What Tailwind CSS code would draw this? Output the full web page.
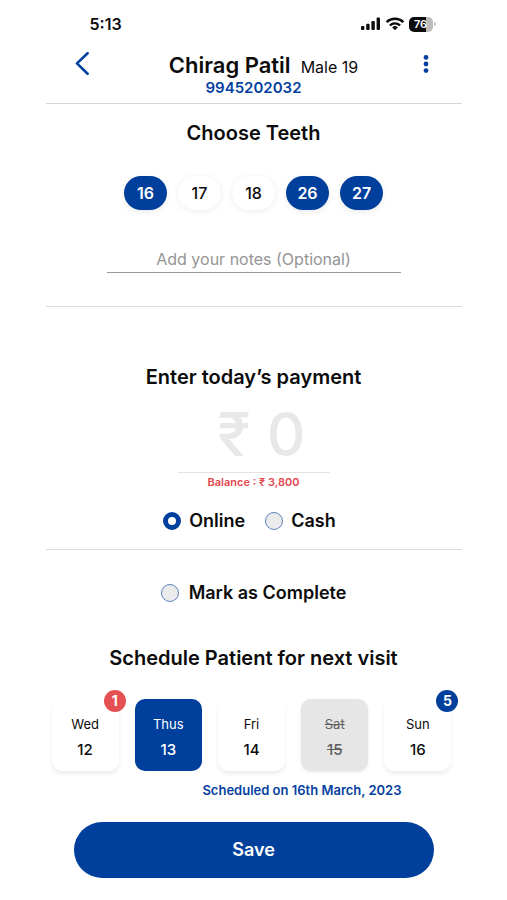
<!DOCTYPE html>
<html lang="en">
<head>
<meta charset="utf-8">
<meta name="viewport" content="width=device-width, initial-scale=1">
<title>Patient visit</title>
<script src="https://cdn.jsdelivr.net/npm/@tailwindcss/browser@4"></script>
</head>
<body class="bg-white text-[#0c0c0c] font-['Inter','Noto_Sans',sans-serif]">
<div class="mx-auto flex min-h-screen w-full max-w-[416px] flex-col">

  <header class="border-b border-[#d6d6d6]">
    <div class="flex h-12 items-center justify-between pr-[26px] pl-11">
      <span class="text-base font-semibold">5:13</span>
      <div class="flex items-center gap-1">
        <svg class="h-[14px] w-[21px]" viewBox="0 0 21 14" fill="#0c0c0c" aria-hidden="true">
          <rect x="1" y="9" width="3.4" height="4" rx="1"/><rect x="6.2" y="6.8" width="3.4" height="6.2" rx="1"/><rect x="11.4" y="4" width="3.4" height="9" rx="1"/><rect x="16.6" y="0.6" width="3.4" height="12.4" rx="1"/>
        </svg>
        <svg class="h-[14px] w-[20px]" viewBox="0 0 20 14" fill="none" stroke="#0c0c0c" stroke-width="2.4" aria-hidden="true">
          <path d="M1.6 5.2a12 12 0 0 1 16.8 0"/><path d="M4.9 8.5a7.3 7.3 0 0 1 10.2 0"/><path d="M10 13.2 7.2 10.4a4 4 0 0 1 5.6 0z" fill="#0c0c0c" stroke="none"/>
        </svg>
        <div class="flex items-center gap-px">
          <span class="flex h-[15px] w-6 items-center justify-center rounded-[5px] bg-linear-to-r from-[#0c0c0c] from-72% to-[#bdbdbd] to-72% text-[11px] leading-none font-semibold text-white">76</span>
          <span class="h-1 w-0.5 rounded-r-full bg-[#bdbdbd]"></span>
        </div>
      </div>
    </div>
    <div class="flex h-[55px] items-start justify-between pr-7 pl-7">
      <button type="button" aria-label="Back" class="mt-1 flex">
        <svg class="h-6 w-4" viewBox="0 0 16 24" fill="none" stroke="#0541a0" stroke-width="2.6" stroke-linecap="round" stroke-linejoin="round"><path d="M13.6 1.2 3 11.4l10.6 10.4"/></svg>
      </button>
      <div class="flex flex-col items-center">
        <h1 class="flex items-baseline gap-2.5 pl-5 text-[22px] leading-[34px] font-semibold">Chirag Patil <small class="text-base font-normal">Male 19</small></h1>
        <a href="tel:9945202032" class="text-[15px] leading-3 font-semibold text-[#0541a0]">9945202032</a>
      </div>
      <button type="button" aria-label="More options" class="mt-1.5 flex w-4 justify-center">
        <svg class="h-5 w-1.5" viewBox="0 0 6 20" fill="#0541a0"><circle cx="3" cy="3.4" r="2.4"/><circle cx="3" cy="10" r="2.4"/><circle cx="3" cy="16.6" r="2.4"/></svg>
      </button>
    </div>
  </header>

  <section class="flex flex-col items-center border-b border-[#dadada] pt-[15px] pb-[33px]">
    <h2 class="text-xl leading-7 font-semibold">Choose Teeth</h2>
    <div class="mt-[29px] flex gap-[11px] text-base font-semibold">
      <button type="button" aria-pressed="true" class="h-[34px] w-[43px] rounded-full bg-[#00409c] text-white shadow-[0_2px_6px_rgba(0,0,0,0.08)]">16</button>
      <button type="button" aria-pressed="false" class="h-[34px] w-[43px] rounded-full bg-white font-medium shadow-[0_1px_6px_rgba(0,0,0,0.08)]">17</button>
      <button type="button" aria-pressed="false" class="h-[34px] w-[43px] rounded-full bg-white font-medium shadow-[0_1px_6px_rgba(0,0,0,0.08)]">18</button>
      <button type="button" aria-pressed="true" class="h-[34px] w-[43px] rounded-full bg-[#00409c] text-white shadow-[0_2px_6px_rgba(0,0,0,0.08)]">26</button>
      <button type="button" aria-pressed="true" class="h-[34px] w-[43px] rounded-full bg-[#00409c] text-white shadow-[0_2px_6px_rgba(0,0,0,0.08)]">27</button>
    </div>
    <input type="text" aria-label="Notes" placeholder="Add your notes (Optional)" class="mt-[31px] h-8 w-[294px] border-b border-[#989898] pt-1 text-center text-base outline-none placeholder:text-[#959595]">
  </section>

  <section class="flex flex-col items-center border-b border-[#dadada] pt-14 pb-[14px]">
    <h2 class="text-xl leading-7 font-semibold"><label for="payment">Enter today’s payment</label></h2>
    <input id="payment" type="text" inputmode="numeric" placeholder="₹ 0" class="mt-1 h-[78px] w-[152px] border-b border-[#e2e2e2] pl-4 text-center text-[60px] leading-none font-medium outline-none placeholder:text-[#e8e8e8]">
    <p class="text-[11px] leading-[18px] font-semibold text-[#e5484d]">Balance : ₹ 3,800</p>
    <div class="mt-4 flex gap-5 pr-2 text-lg leading-7 font-semibold">
      <label class="flex items-center gap-2"><input type="radio" name="method" checked class="size-[18px] appearance-none rounded-full border border-[#5c83c0] bg-[#ebebeb] checked:border-5 checked:border-[#00409c] checked:bg-white">Online</label>
      <label class="flex items-center gap-2"><input type="radio" name="method" class="size-[18px] appearance-none rounded-full border border-[#5c83c0] bg-[#ebebeb] checked:border-5 checked:border-[#00409c] checked:bg-white">Cash</label>
    </div>
  </section>

  <section class="flex flex-col items-center pt-[29px]">
    <label class="flex items-center gap-2.5 text-lg leading-7 font-semibold"><input type="checkbox" class="size-[18px] appearance-none rounded-full border border-[#5c83c0] bg-[#ebebeb] checked:border-5 checked:border-[#00409c] checked:bg-white">Mark as Complete</label>
    <h2 class="mt-[37px] text-xl leading-7 font-semibold">Schedule Patient for next visit</h2>
    <div class="mt-[27px] grid w-full grid-cols-5 gap-4 pr-2.5 pl-1.5">
      <button type="button" class="relative flex h-[72px] flex-col items-center justify-center rounded-[10px] bg-white pt-1.5 shadow-[0_3px_4px_rgba(0,0,0,0.07)]">
        <span class="text-[13px] leading-6">Wed</span><span class="text-[15px] leading-7 font-medium">12</span>
        <span class="absolute -top-[9px] -right-[7px] flex size-[22px] items-center justify-center rounded-full bg-[#e55153] text-sm leading-none font-bold text-white">1</span>
      </button>
      <button type="button" aria-pressed="true" class="flex h-[72px] flex-col items-center justify-center rounded-[10px] bg-[#00409c] pt-1.5 text-white">
        <span class="text-[13px] leading-6">Thus</span><span class="text-[15px] leading-7 font-medium">13</span>
      </button>
      <button type="button" class="flex h-[72px] flex-col items-center justify-center rounded-[10px] bg-white pt-1.5 shadow-[0_3px_4px_rgba(0,0,0,0.07)]">
        <span class="text-[13px] leading-6">Fri</span><span class="text-[15px] leading-7 font-medium">14</span>
      </button>
      <button type="button" disabled class="flex h-[72px] flex-col items-center justify-center rounded-[10px] bg-[#e6e6e6] pt-1.5 text-[#606060] line-through shadow-[0_1px_3px_rgba(0,0,0,0.1)]">
        <span class="text-[13px] leading-6">Sat</span><span class="text-[15px] leading-7 font-medium">15</span>
      </button>
      <button type="button" class="relative flex h-[72px] flex-col items-center justify-center rounded-[10px] bg-white pt-1.5 shadow-[0_3px_4px_rgba(0,0,0,0.07)]">
        <span class="text-[13px] leading-6">Sun</span><span class="text-[15px] leading-7 font-medium">16</span>
        <span class="absolute -top-[9px] -right-[7px] flex size-[22px] items-center justify-center rounded-full bg-[#00409c] text-sm leading-none font-bold text-white">5</span>
      </button>
    </div>
    <p class="mt-[7px] self-end pr-[60px] text-[13px] leading-6 font-semibold text-[#0541a0]">Scheduled on 16th March, 2023</p>
  </section>

  <div class="px-7 pt-5 pb-5">
    <button type="button" class="h-14 w-full rounded-full bg-[#00409c] text-lg font-semibold text-white">Save</button>
  </div>
</div>
</body>
</html>
